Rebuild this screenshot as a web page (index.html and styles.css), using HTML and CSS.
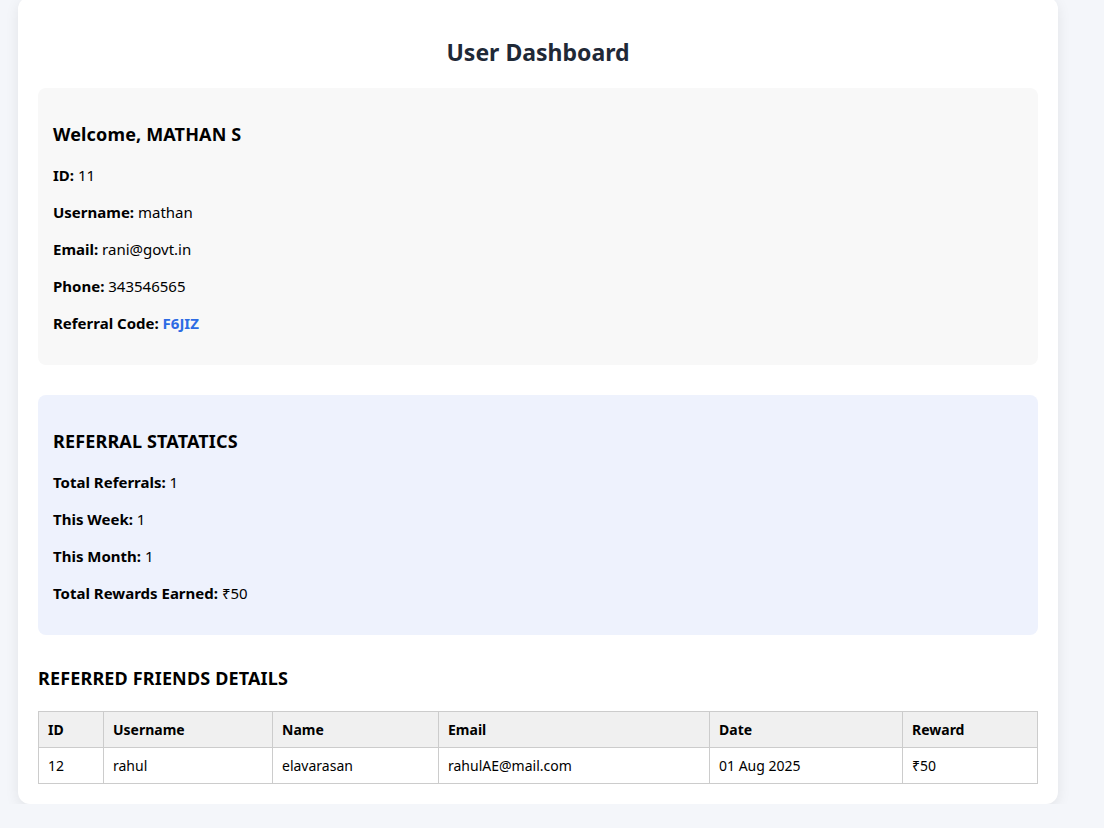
FILE: index.html
```html
<!DOCTYPE html>
<html lang="en">
<head>
<meta charset="utf-8">
<title>User Dashboard</title>
<link rel="stylesheet" href="styles.css">
</head>
<body>
<div class="card">
  <h2 class="title">User Dashboard</h2>

  <section class="panel panel-profile">
    <h3>Welcome, MATHAN S</h3>
    <p><strong>ID:</strong> 11</p>
    <p><strong>Username:</strong> mathan</p>
    <p><strong>Email:</strong> rani@govt.in</p>
    <p><strong>Phone:</strong> 343546565</p>
    <p><strong>Referral Code:</strong> <span class="code">F6JIZ</span></p>
  </section>

  <section class="panel panel-stats">
    <h3>REFERRAL STATATICS</h3>
    <p><strong>Total Referrals:</strong> 1</p>
    <p><strong>This Week:</strong> 1</p>
    <p><strong>This Month:</strong> 1</p>
    <p><strong>Total Rewards Earned:</strong> ₹50</p>
  </section>

  <h3 class="list-title">REFERRED FRIENDS DETAILS</h3>
  <table class="friends">
    <colgroup>
      <col class="c-id"><col class="c-user"><col class="c-name"><col class="c-email"><col class="c-date"><col class="c-reward">
    </colgroup>
    <thead>
      <tr><th>ID</th><th>Username</th><th>Name</th><th>Email</th><th>Date</th><th>Reward</th></tr>
    </thead>
    <tbody>
      <tr><td>12</td><td>rahul</td><td>elavarasan</td><td>rahulAE@mail.com</td><td>01 Aug 2025</td><td>₹50</td></tr>
    </tbody>
  </table>
</div>
</body>
</html>
```
FILE: styles.css
```css
html, body {
  margin: 0;
  padding: 0;
  background: #f4f6fa;
  font-family: "Noto Sans", "Open Sans", sans-serif;
  color: #000;
}

.card {
  width: 1000px;
  margin: -3px 0 0 18px;
  padding: 20px;
  background: #fff;
  border-radius: 12px;
  box-shadow: 0 4px 14px rgba(0, 0, 0, 0.08);
}

.title {
  margin: 20px 0;
  font-size: 23px;
  line-height: 31px;
  text-align: center;
  color: #1f2937;
  font-weight: 700;
}

.panel {
  padding: 15px;
  border-radius: 8px;
  margin: 0 0 30px;
}

.panel-profile { background: #f8f8f8; }
.panel-stats { background: #eef2fd; }

h3 {
  font-size: 18px;
  line-height: 26px;
  margin: 18px 0;
  font-weight: 700;
  letter-spacing: 0.15px;
}

.panel p {
  font-size: 15px;
  line-height: 21px;
  margin: 16px 0;
}

.code {
  color: #2d6be4;
  font-weight: 700;
}

.list-title {
  margin: 18px 0 20px;
}

.friends {
  width: 1000px;
  border-collapse: collapse;
  font-size: 14px;
}

.friends th,
.friends td {
  border: 1px solid #ccc;
  padding: 8px 9px;
  line-height: 19px;
  text-align: left;
}

.friends th {
  background: #f0f0f0;
  font-weight: 700;
}

.c-id { width: 65px; }
.c-user { width: 169px; }
.c-name { width: 166px; }
.c-email { width: 271px; }
.c-date { width: 193px; }
.c-reward { width: 135px; }
```
